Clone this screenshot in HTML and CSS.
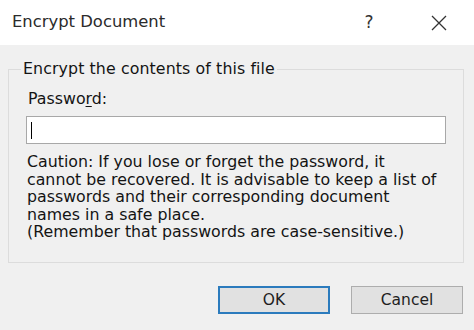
FILE: index.html
```html
<!DOCTYPE html>
<html lang="en">
	<head>
		<meta charset="UTF-8">
		<meta name="viewport" content="width=device-width, initial-scale=1.0">
		<title>Encrypt Document</title>
		<link rel="stylesheet" href="styles.css">
	</head>
	<body>
		<div class="dialog">
			<!-- title bar -->
			<div class="titlebar">
				<span class="title">Encrypt Document</span>
				<span class="help">?</span>
				<span class="close">
					<svg width="16" height="16" viewBox="0 0 16 16">
						<path d="M1 1 L15 15 M15 1 L1 15" stroke="#333" stroke-width="1.3" fill="none" />
					</svg>
				</span>
			</div>

			<div class="content">
				<fieldset class="group">
					<legend>Encrypt the contents of this file</legend>
					<label class="field-label" for="pwd">Passwo<u>r</u>d:</label>
					<div class="input"><span class="caret"></span></div>
					<p class="caution">
						Caution: If you lose or forget the password, it<br>
						cannot be recovered. It is advisable to keep a list of<br>
						passwords and their corresponding document<br>
						names in a safe place.<br>
						(Remember that passwords are case-sensitive.)
					</p>
				</fieldset>

				<div class="buttons">
					<button class="btn default">OK</button>
					<button class="btn">Cancel</button>
				</div>
			</div>
		</div>
	</body>
</html>
```

FILE: styles.css
```css
* {
	margin: 0;
	padding: 0;
	box-sizing: border-box;
}

body {
	font-family: "DejaVu Sans", "Open Sans", sans-serif;
	color: #141414;
	background: #f0f0f0;
}

.dialog {
	width: 474px;
	height: 330px;
	background: #f0f0f0;
}

/* title bar */
.titlebar {
	height: 45px;
	background: #fff;
	display: flex;
	align-items: center;
	padding-left: 12px;
}

.title {
	font-size: 16.4px;
	color: #2b2b2b;
	flex: 1;
	padding-bottom: 2px;
}

.help {
	font-size: 17px;
	color: #333;
	width: 20px;
	text-align: center;
	margin-right: 52px;
	padding-bottom: 2px;
}

.close {
	width: 16px;
	height: 16px;
	margin-right: 27px;
	display: flex;
}

/* body */
.content {
	padding: 15px 10px 0 8px;
}

.group {
	border: 1px solid #dcdcdc;
	padding: 0 17px 21px 17px;
	font-size: 15.8px;
}

.group legend {
	margin-left: -5px;
	padding: 0 2px;
	line-height: 18px;
	letter-spacing: 0.1px;
}

.field-label {
	display: block;
	margin-top: 12px;
	line-height: 18px;
	padding-left: 2px;
}

.field-label u {
	text-decoration-thickness: 1px;
	text-underline-offset: 2px;
}

.input {
	margin-top: 8px;
	height: 28px;
	background: #fff;
	border: 1px solid #a8a8a8;
	display: flex;
	align-items: center;
	padding-left: 4px;
}

.caret {
	width: 1px;
	height: 17px;
	background: #000;
}

.caution {
	margin-top: 9px;
	line-height: 17.5px;
	padding-left: 1px;
}

/* buttons */
.buttons {
	display: flex;
	justify-content: flex-end;
	gap: 21px;
	margin-top: 23px;
	padding-right: 1px;
}

.btn {
	width: 112px;
	height: 28px;
	font-family: inherit;
	font-size: 15.5px;
	color: #1e1e1e;
	background: #e1e1e1;
	border: 1px solid #adadad;
}

.btn.default {
	border: 2px solid #2b7bbd;
}
```
